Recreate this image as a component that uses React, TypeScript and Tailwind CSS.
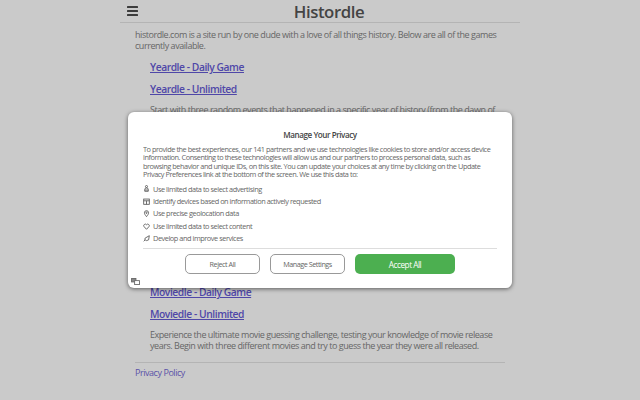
import React from "react";

const F = "font-['Open_Sans',sans-serif] tracking-[-0.05em]";

function GameLink({ children, className = "" }: { children: React.ReactNode; className?: string }) {
  return (
    <a href="#" className={`block text-[10.3px] leading-[14px] font-semibold text-[#4f47a8] underline ${className}`}>
      {children}
    </a>
  );
}

const ic = "w-[7px] h-[7px] shrink-0";
const items: [React.ReactNode, string][] = [
  [
    <svg viewBox="0 0 10 10" className={ic} fill="none" stroke="#555" strokeWidth="1.2">
      <circle cx="5" cy="2.2" r="1.5" />
      <path d="M2.5 9V6.2a2.5 2 0 0 1 5 0V9zM2.5 7.2h5" />
    </svg>,
    "Use limited data to select advertising",
  ],
  [
    <svg viewBox="0 0 10 10" className={ic} fill="none" stroke="#555" strokeWidth="1.2">
      <rect x="1" y="1.5" width="8" height="7.5" />
      <path d="M1 4h8M5 4v5" />
    </svg>,
    "Identify devices based on information actively requested",
  ],
  [
    <svg viewBox="0 0 10 10" className={ic} fill="none" stroke="#555" strokeWidth="1.2">
      <path d="M5 9.5C3 7 2 5.6 2 4a3 3 0 0 1 6 0c0 1.6-1 3-3 5.5z" />
      <circle cx="5" cy="4" r="1" />
    </svg>,
    "Use precise geolocation data",
  ],
  [
    <svg viewBox="0 0 10 10" className={ic} fill="none" stroke="#555" strokeWidth="1.2">
      <path d="M5 9 1.5 5.2A2.2 2.2 0 0 1 5 2.5a2.2 2.2 0 0 1 3.5 2.7z" />
    </svg>,
    "Use limited data to select content",
  ],
  [
    <svg viewBox="0 0 10 10" className={ic} fill="none" stroke="#555" strokeWidth="1.2">
      <path d="M1 9 3 7M3 4.5 9 1 8 7 5 8 2.5 6.5z" />
    </svg>,
    "Develop and improve services",
  ],
];

export default function App() {
  return (
    <div className={`${F} relative h-[400px] w-[640px] overflow-hidden bg-[#cacaca] text-[9px] leading-[11px] text-[#666]`}>
      <div className="mx-auto w-[400px]">
        <header className="flex h-[23px] items-center border-b border-[#b4b4b4] pl-[7px]">
          <svg viewBox="0 0 11 10" className="h-[10px] w-[11px]" fill="#3c3c3c">
            <rect width="11" height="2" rx="0.5" />
            <rect y="4" width="11" height="2" rx="0.5" />
            <rect y="8" width="11" height="2" rx="0.5" />
          </svg>
          <h1 className="flex-1 text-center text-[16.8px] leading-[23px] font-semibold text-[#444]">Histordle</h1>
        </header>
        <main className="px-[15px]">
          <p className="mt-[6px]">
            histordle.com is a site run by one dude with a love of all things history. Below are all of the games currently available.
          </p>
          <div className="pl-[15px]">
            <GameLink className="mt-[9px]">Yeardle - Daily Game</GameLink>
            <GameLink className="mt-[8px]">Yeardle - Unlimited</GameLink>
            <p className="mt-[8px] h-[181px] overflow-hidden">
              Start with three random events that happened in a specific year of history (from the dawn of civilization to the present day) and try to guess the year.
            </p>
            <GameLink>Moviedle - Daily Game</GameLink>
            <GameLink className="mt-[8px]">Moviedle - Unlimited</GameLink>
            <p className="mt-[8px]">
              Experience the ultimate movie guessing challenge, testing your knowledge of movie release years. Begin with three different movies and try to guess the year they were all released.
            </p>
          </div>
          <div className="mt-[11px] border-t border-[#b4b4b4] pt-[4px]">
            <a href="#" className="text-[#5a52a8]">Privacy Policy</a>
          </div>
        </main>
      </div>

      <div className="absolute left-[128px] top-[112px] flex h-[176px] w-[384px] flex-col rounded-[6px] bg-white shadow-[0_1px_4px_rgba(0,0,0,0.55)]">
        <h2 className="mt-[17px] text-center text-[8.1px] leading-[11px] font-semibold text-[#444]">Manage Your Privacy</h2>
        <div className="mx-[15px] mt-[5px] h-[104px] overflow-hidden border-b border-[#ddd] text-[7.35px] leading-[8.4px] text-[#666]">
          <p className="pr-[6px]">
            To provide the best experiences, our 141 partners and we use technologies like cookies to store and/or access device information. Consenting to these technologies will allow us and our partners to process personal data, such as browsing behavior and unique IDs, on this site. You can update your choices at any time by clicking on the Update Privacy Preferences link at the bottom of the screen. We use this data to:
          </p>
          <ul className="mt-[6px] flex flex-col gap-[3.9px]">
            {items.map(([icon, label], i) => (
              <li key={i} className="flex items-center gap-[3px] leading-[8.5px]">
                {icon}
                <span>{label}</span>
              </li>
            ))}
          </ul>
        </div>
        <div className="relative flex-1">
          <div className="absolute left-[57px] top-[5px] flex gap-[10px]">
            <button className="h-[20px] w-[75px] rounded-[5px] border border-[#999] bg-white text-[7.2px] text-[#666]">Reject All</button>
            <button className="h-[20px] w-[75px] rounded-[5px] border border-[#999] bg-white text-[7.2px] text-[#666]">Manage Settings</button>
            <button className="h-[20px] w-[100px] rounded-[5px] bg-[#4caf50] text-[8.2px] text-white">Accept All</button>
          </div>
          <svg viewBox="0 0 10 8" className="absolute bottom-[3px] left-[3px] h-[7px] w-[9px]" fill="none" stroke="#666" strokeWidth="1">
            <rect x="0.5" y="0.5" width="5" height="4" fill="#888" />
            <rect x="4" y="3" width="5.5" height="4.5" fill="#fff" />
          </svg>
        </div>
      </div>
    </div>
  );
}
